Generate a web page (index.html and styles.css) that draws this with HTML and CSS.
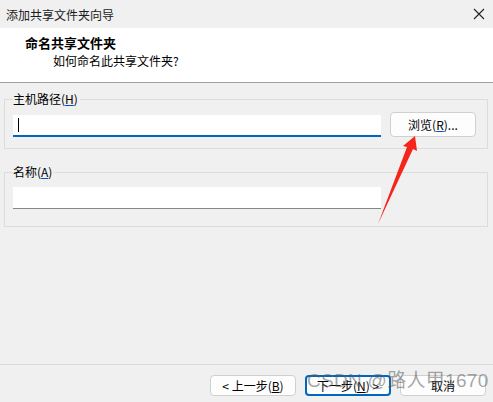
FILE: index.html
```html
<!DOCTYPE html>
<html lang="zh-CN">
<head>
  <meta charset="UTF-8" />
  <title>添加共享文件夹向导</title>
  <link rel="stylesheet" href="styles.css">
</head>
<body>
  <div class="window">
    <div class="titlebar">
      <span class="title">添加共享文件夹向导</span>
      <span class="close">
        <svg width="12" height="12" viewBox="0 0 12 12"><path d="M1 1 L11 11 M11 1 L1 11" stroke="#222" stroke-width="1.1" fill="none"/></svg>
      </span>
    </div>

    <div class="header">
      <div class="header-title">命名共享文件夹</div>
      <div class="header-sub">如何命名此共享文件夹?</div>
    </div>

    <div class="content">
      <fieldset class="group">
        <legend>主机路径(<u>H</u>)</legend>
        <div class="row">
          <div class="textbox focused"><span class="caret"></span></div>
          <button class="btn browse">浏览(<u>R</u>)...</button>
        </div>
      </fieldset>

      <fieldset class="group second">
        <legend>名称(<u>A</u>)</legend>
        <div class="row">
          <div class="textbox"></div>
        </div>
      </fieldset>
    </div>

    <div class="footer">
      <button class="btn">&lt; 上一步(<u>B</u>)</button>
      <button class="btn primary">下一步(<u>N</u>) &gt;</button>
      <button class="btn">取消</button>
    </div>

    <!-- 截图上的标注箭头 -->
    <svg class="arrow" width="493" height="402" viewBox="0 0 493 402">
      <path d="M378 224 L407 147 L403 146 L415 136 L417 151 L413 149 Z" fill="#f5251c"/>
    </svg>
    <div class="watermark">CSDN @路人甲1670</div>
  </div>
</body>
</html>
```

FILE: styles.css
```css
body {
  margin: 0;
  font-family: "Noto Sans CJK SC", "Liberation Sans", sans-serif;
  font-size: 12px;
  color: #000;
}
.window {
  position: relative;
  width: 493px;
  height: 402px;
  background-color: #f0f0f0;
  display: flex;
  flex-direction: column;
  overflow: hidden;
}
.titlebar {
  height: 28px;
  display: flex;
  align-items: center;
  justify-content: space-between;
  padding: 0 8px 0 6px;
  background-color: #f0f0f0;
}
.title {
  color: #1a1a1a;
}
.close {
  display: flex;
}
.header {
  height: 55px;
  background-color: #fff;
  border-bottom: 1px solid #a0a0a0;
  box-sizing: border-box;
  padding-top: 6px;
}
.header-title {
  font-weight: bold;
  font-size: 13px;
  padding-left: 25px;
  line-height: 18px;
}
.header-sub {
  padding-left: 53px;
  line-height: 18px;
}
.content {
  padding: 8px 5px 0 4px;
  flex: 1;
}
.group {
  margin: 0;
  padding: 0 8px 11px 8px;
  border: 1px solid #dcdcdc;
  min-width: 0;
}
.group.second {
  margin-top: 15px;
  padding-bottom: 17px;
}
.group legend {
  padding: 0 2px 0 0;
  line-height: 16px;
  color: #000;
}
.group u {
  text-decoration-color: #0050c0;
  text-underline-offset: 1px;
}
.row {
  display: flex;
  align-items: center;
  margin-top: 7px;
}
.textbox {
  width: 368px;
  height: 22px;
  box-sizing: border-box;
  background-color: #fff;
  border-bottom: 1px solid #868686;
  position: relative;
}
.textbox.focused {
  border-bottom: 2px solid #0067c0;
}
.caret {
  position: absolute;
  left: 5px;
  top: 3px;
  width: 1px;
  height: 14px;
  background-color: #000;
}
.btn {
  font-family: "Noto Sans CJK SC", "Liberation Sans", sans-serif;
  font-size: 12px;
  color: #000;
  background-color: #fdfdfd;
  border: 1px solid #d0d0d0;
  border-radius: 4px;
  height: 21px;
  width: 86px;
  padding: 0;
  line-height: 18px;
}
.browse {
  height: 25px;
  width: 86px;
  margin-left: 9px;
  margin-top: -2px;
}
.footer {
  box-sizing: border-box;
  border-top: 1px solid #dadada;
  height: 38px;
  display: flex;
  justify-content: flex-end;
  align-items: flex-start;
  gap: 9px;
  padding: 10px 7px 0 0;
}
.btn.primary {
  border: 2px solid #0067c0;
}
.arrow {
  position: absolute;
  left: 0;
  top: 0;
  pointer-events: none;
}
.watermark {
  position: absolute;
  left: 307px;
  top: 370px;
  white-space: nowrap;
  font-family: "Liberation Sans", "Noto Sans CJK SC", sans-serif;
  font-size: 19px;
  line-height: 22px;
  color: rgba(90, 90, 90, 0.55);
  letter-spacing: 0.3px;
}
```
